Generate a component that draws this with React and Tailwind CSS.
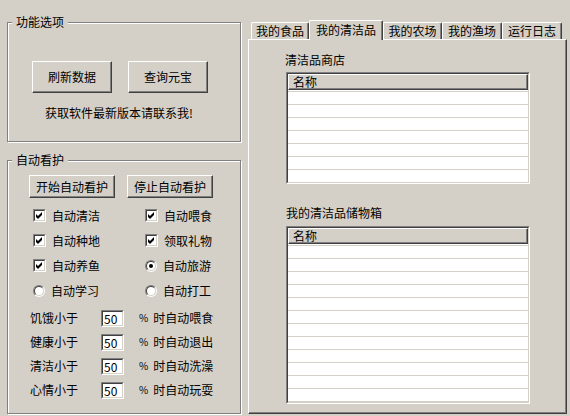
import React from "react";

const FONT = { fontFamily: '"Noto Sans CJK SC", "Noto Sans", sans-serif' };

function Raised({ className = "", children }) {
  return (
    <div
      className={`flex items-center justify-center bg-[#d4d0c8] border border-t-white border-l-white border-r-[#404040] border-b-[#404040] shadow-[inset_-1px_-1px_0_#808080] ${className}`}
    >
      {children}
    </div>
  );
}

function Sunken({ className = "", children }) {
  return (
    <div className={`border border-t-[#808080] border-l-[#808080] border-r-white border-b-white ${className}`}>
      <div className="h-full w-full border border-t-[#404040] border-l-[#404040] border-r-[#d4d0c8] border-b-[#d4d0c8] bg-white overflow-hidden flex flex-col">
        {children}
      </div>
    </div>
  );
}

function Check() {
  return (
    <Sunken className="w-[13px] h-[13px] shrink-0">
      <svg width="9" height="9" viewBox="0 0 9 9" className="block">
        <path d="M1 3 L3 5 L7 1 L7 4 L3 8 L1 6 Z" fill="#000" />
      </svg>
    </Sunken>
  );
}

function Radio({ on }) {
  return (
    <div className="w-[12px] h-[12px] shrink-0 rounded-full border border-t-[#808080] border-l-[#808080] border-r-white border-b-white">
      <div className="w-full h-full rounded-full bg-white border border-t-[#404040] border-l-[#404040] border-r-[#d4d0c8] border-b-[#d4d0c8] flex items-center justify-center">
        {on && <div className="w-[4px] h-[4px] rounded-full bg-black" />}
      </div>
    </div>
  );
}

function Group({ title, className = "", children }) {
  return (
    <div className={`relative border border-[#808080] shadow-[inset_1px_1px_0_#fff,1px_1px_0_#fff] ${className}`}>
      <span className="absolute left-[4px] top-[-8px] px-[4px] bg-[#d4d0c8] leading-[14px]">{title}</span>
      {children}
    </div>
  );
}

function ListBox({ className = "" }) {
  const rows = Array.from({ length: 14 });
  return (
    <Sunken className={className}>
      <Raised className="h-[16px] shrink-0 !justify-start pl-[4px] leading-[14px]">名称</Raised>
      <div className="mt-[1px]">
        {rows.map((_, i) => (
          <div key={i} className="h-[13px] border-t border-[#d4d0c8]" />
        ))}
      </div>
    </Sunken>
  );
}

const checks = [
  [{ t: "自动清洁", k: "c" }, { t: "自动喂食", k: "c" }],
  [{ t: "自动种地", k: "c" }, { t: "领取礼物", k: "c" }],
  [{ t: "自动养鱼", k: "c" }, { t: "自动旅游", k: "r1" }],
  [{ t: "自动学习", k: "r0" }, { t: "自动打工", k: "r0" }],
];

const limits = [
  ["饥饿小于", "时自动喂食"],
  ["健康小于", "时自动退出"],
  ["清洁小于", "时自动洗澡"],
  ["心情小于", "时自动玩耍"],
];

const tabs = [
  { t: "我的食品", w: "w-[58px]" },
  { t: "我的清洁品", w: "w-[74px]", on: true },
  { t: "我的农场", w: "w-[59px]" },
  { t: "我的渔场", w: "w-[60px]" },
  { t: "运行日志", w: "w-[60px]" },
];

export default function App() {
  return (
    <div style={FONT} className="w-[570px] h-[416px] bg-[#d4d0c8] text-[12px] text-black flex overflow-hidden">
      {/* left column */}
      <div className="pl-[7px] w-[241px] flex flex-col shrink-0">
        <Group title="功能选项" className="mt-[22px] h-[120px]">
          <div className="flex gap-[16px] pl-[24px] mt-[38px]">
            <Raised className="w-[80px] h-[32px]">刷新数据</Raised>
            <Raised className="w-[80px] h-[32px]">查询元宝</Raised>
          </div>
          <div className="pl-[37px] mt-[13px] leading-[14px]">获取软件最新版本请联系我!</div>
        </Group>

        <Group title="自动看护" className="mt-[18px] h-[254px]">
          <div className="flex gap-[12px] pl-[21px] mt-[14px]">
            <Raised className="w-[86px] h-[23px]">开始自动看护</Raised>
            <Raised className="w-[86px] h-[23px]">停止自动看护</Raised>
          </div>
          <div className="mt-[5px] pl-[25px] grid grid-cols-[112px_1fr]">
            {checks.flat().map((c) => (
              <div key={c.t} className="h-[25px] flex items-center gap-[6px]">
                {c.k === "c" ? <Check /> : <Radio on={c.k === "r1"} />}
                <span className="leading-[14px]">{c.t}</span>
              </div>
            ))}
          </div>
          <div className="mt-[3px] pl-[22px] flex flex-col">
            {limits.map(([a, b]) => (
              <div key={a} className="h-[24px] flex items-center">
                <span className="w-[71px] leading-[14px]">{a}</span>
                <Sunken className="w-[23px] h-[17px]">
                  <span className="pl-[1px] leading-[13px]">50</span>
                </Sunken>
                <span className="ml-[15px] text-[10px] leading-[14px]">%</span>
                <span className="ml-[5px] leading-[14px]">{b}</span>
              </div>
            ))}
          </div>
        </Group>
      </div>

      {/* right tabs */}
      <div className="ml-[7px] w-[319px] flex flex-col">
        <div className="mt-[20px] h-[19px] flex items-end pl-[3px] relative z-10">
          {tabs.map((tab) => (
            <div
              key={tab.t}
              className={`${tab.w} flex items-center justify-center leading-[14px] bg-[#d4d0c8] border-t border-l border-t-white border-l-white border-r border-r-[#404040] rounded-t-[2px] shadow-[inset_-1px_0_0_#808080] ${
                tab.on ? "h-[20px] -mb-[1px] pb-[2px]" : "h-[17px]"
              }`}
            >
              {tab.t}
            </div>
          ))}
        </div>
        <div className="h-[375px] border border-t-white border-l-white border-r-[#404040] border-b-[#404040] shadow-[inset_-1px_-1px_0_#808080] flex flex-col pl-[37px]">
          <div className="mt-[13px] -ml-[1px] leading-[14px]">清洁品商店</div>
          <ListBox className="mt-[5px] w-[244px] h-[112px] shrink-0" />
          <div className="mt-[22px] leading-[14px]">我的清洁品储物箱</div>
          <ListBox className="mt-[6px] w-[244px] h-[178px] shrink-0" />
        </div>
      </div>
    </div>
  );
}
